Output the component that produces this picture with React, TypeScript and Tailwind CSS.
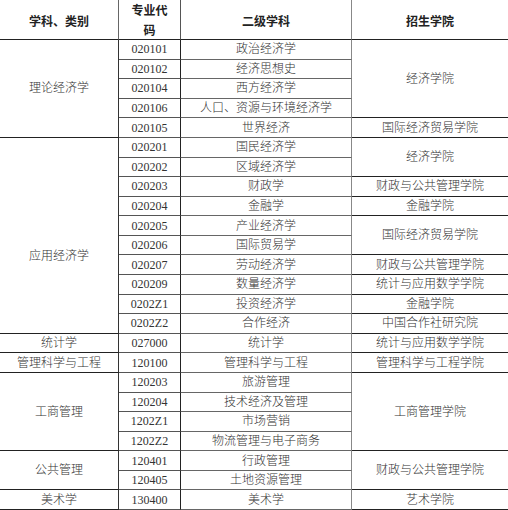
import React from "react";

type Cell = { text: string; span?: number; cls?: string };

const spanCls: Record<number, string> = {
  1: "",
  2: "row-span-2",
  4: "row-span-4",
  5: "row-span-5",
  10: "row-span-10",
};

// each row lists only the cells that start in it: [col1?, code, subject, college?]
const rows: { c1?: Cell; code: string; name: string; c4?: Cell }[] = [
  { c1: { text: "理论经济学", span: 5 }, code: "020101", name: "政治经济学", c4: { text: "经济学院", span: 4 } },
  { code: "020102", name: "经济思想史" },
  { code: "020104", name: "西方经济学" },
  { code: "020106", name: "人口、资源与环境经济学" },
  { code: "020105", name: "世界经济", c4: { text: "国际经济贸易学院" } },
  { c1: { text: "应用经济学", span: 10, cls: "pt-[42px]" }, code: "020201", name: "国民经济学", c4: { text: "经济学院", span: 2 } },
  { code: "020202", name: "区域经济学" },
  { code: "020203", name: "财政学", c4: { text: "财政与公共管理学院" } },
  { code: "020204", name: "金融学", c4: { text: "金融学院" } },
  { code: "020205", name: "产业经济学", c4: { text: "国际经济贸易学院", span: 2 } },
  { code: "020206", name: "国际贸易学" },
  { code: "020207", name: "劳动经济学", c4: { text: "财政与公共管理学院" } },
  { code: "020209", name: "数量经济学", c4: { text: "统计与应用数学学院" } },
  { code: "0202Z1", name: "投资经济学", c4: { text: "金融学院" } },
  { code: "0202Z2", name: "合作经济", c4: { text: "中国合作社研究院" } },
  { c1: { text: "统计学" }, code: "027000", name: "统计学", c4: { text: "统计与应用数学学院" } },
  { c1: { text: "管理科学与工程" }, code: "120100", name: "管理科学与工程", c4: { text: "管理科学与工程学院" } },
  { c1: { text: "工商管理", span: 4 }, code: "120203", name: "旅游管理", c4: { text: "工商管理学院", span: 4 } },
  { code: "120204", name: "技术经济及管理" },
  { code: "1202Z1", name: "市场营销" },
  { code: "1202Z2", name: "物流管理与电子商务" },
  { c1: { text: "公共管理", span: 2 }, code: "120401", name: "行政管理", c4: { text: "财政与公共管理学院", span: 2 } },
  { code: "120405", name: "土地资源管理" },
  { c1: { text: "美术学" }, code: "130400", name: "美术学", c4: { text: "艺术学院" } },
];

export default function App() {
  const base = "flex items-center justify-center whitespace-nowrap";
  return (
    <div
      className="w-[508px] h-[510px] overflow-hidden bg-white text-[12px] leading-none text-[#333] font-light"
      style={{ fontFamily: '"Liberation Serif", "Noto Sans CJK SC", serif' }}
    >
      <div className="grid h-[510px] grid-cols-[119px_62px_171px_156px] grid-rows-[40px_repeat(24,1fr)]">
        <div className={`${base} border-r border-b border-r-[#666] border-b-[#222] font-bold text-[#222] pt-[5px]`}>学科、类别</div>
        <div className={`${base} flex-col gap-[8px] border-r border-b border-r-[#555] border-b-[#222] font-bold text-[#222] pt-[2px]`}>
          <span>专业代</span>
          <span>码</span>
        </div>
        <div className={`${base} border-r border-b border-r-[#888] border-b-[#222] font-bold text-[#222] pt-[5px]`}>二级学科</div>
        <div className={`${base} border-b border-b-[#222] font-bold text-[#222] pt-[5px]`}>招生学院</div>
        {rows.map((r, i) => (
          <React.Fragment key={i}>
            {r.c1 && (
              <div className={`${base} ${spanCls[r.c1.span ?? 1]} ${r.c1.cls ?? ""} border-r border-b border-r-[#333] border-b-[#222]`}>
                {r.c1.text}
              </div>
            )}
            <div className={`${base} border-r border-b border-r-[#222] border-b-[#555]`}>{r.code}</div>
            <div className={`${base} border-r border-b border-r-[#888] border-b-[#666]`}>{r.name}</div>
            {r.c4 && (
              <div className={`${base} ${spanCls[r.c4.span ?? 1]} border-b border-b-[#222]`}>{r.c4.text}</div>
            )}
          </React.Fragment>
        ))}
      </div>
    </div>
  );
}
